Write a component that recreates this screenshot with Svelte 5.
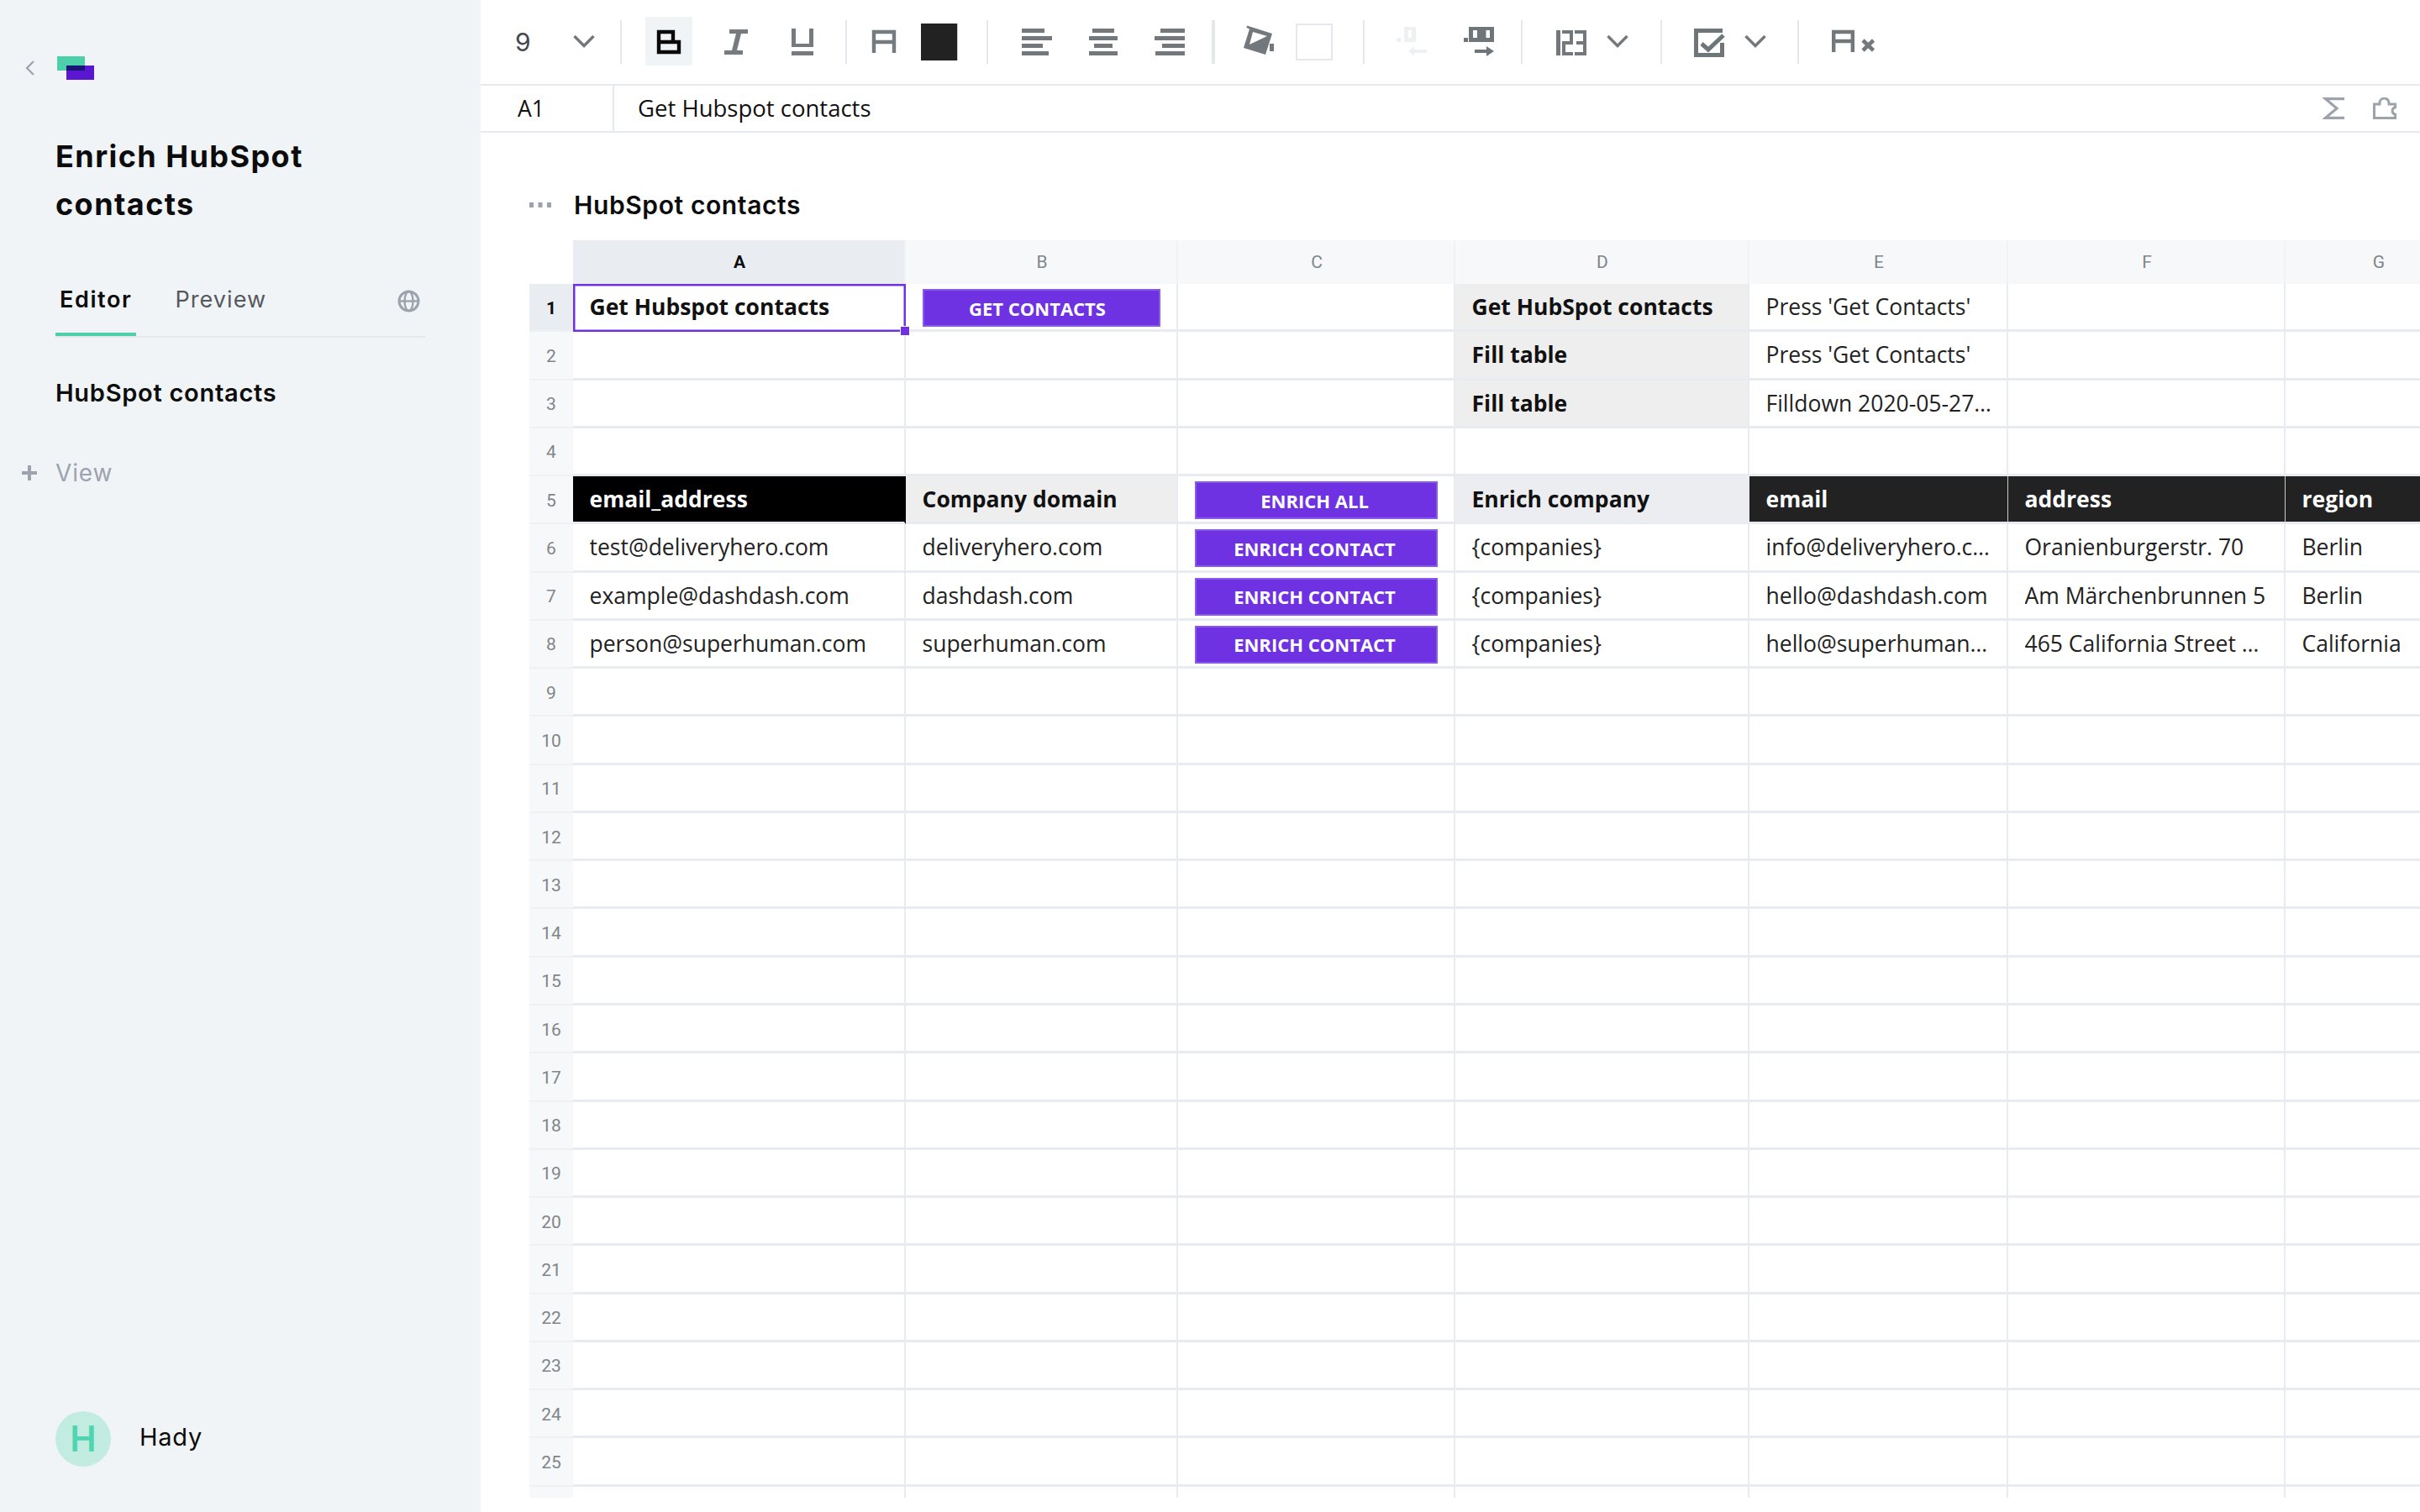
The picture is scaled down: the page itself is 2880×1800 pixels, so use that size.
<script lang="ts">
  const columns = ["A", "B", "C", "D", "E", "F", "G"];
  const rowNumbers = Array.from({ length: 26 }, (_, i) => i + 1);

  // sparse sheet content: kind picks the cell style, btn makes a button
  const txt = (t: string, kind = "") => ({ t, kind });
  const btn = (label: string, kind = "") => ({ label, kind });
  const head = (t: string) => txt(t, "dark");

  const sheet: Record<number, any[]> = {
    1: [txt("Get Hubspot contacts", "strong"), btn("GET CONTACTS", "wide"), null, txt("Get HubSpot contacts", "label"), txt("Press 'Get Contacts'")],
    2: [null, null, null, txt("Fill table", "label"), txt("Press 'Get Contacts'")],
    3: [null, null, null, txt("Fill table", "label"), txt("Filldown 2020-05-27 10:42:18")],
    5: [txt("email_address", "black"), txt("Company domain", "label"), btn("ENRICH ALL"), txt("Enrich company", "label2"), head("email"), head("address"), head("region")],
    6: [txt("test@deliveryhero.com"), txt("deliveryhero.com"), btn("ENRICH CONTACT"), txt("{companies}"), txt("info@deliveryhero.com"), txt("Oranienburgerstr. 70"), txt("Berlin")],
    7: [txt("example@dashdash.com"), txt("dashdash.com"), btn("ENRICH CONTACT"), txt("{companies}"), txt("hello@dashdash.com"), txt("Am Märchenbrunnen 5"), txt("Berlin")],
    8: [txt("person@superhuman.com"), txt("superhuman.com"), btn("ENRICH CONTACT"), txt("{companies}"), txt("hello@superhuman.com"), txt("465 California Street Suite 300"), txt("California")],
  };
</script>

<div class="app">
  <aside class="sidebar">
    <div class="brand">
      <svg class="back" width="11" height="18" viewBox="0 0 11 18"><path d="M10 1 L2 9 L10 17" fill="none" stroke="#9ca3af" stroke-width="2.2" /></svg>
      <svg width="44" height="28" viewBox="0 0 44 28">
        <rect width="33" height="17" fill="#4dd0aa" />
        <rect x="11" y="11" width="33" height="17" fill="#5a17cf" />
        <rect x="11" y="11" width="22" height="6" fill="#1a1478" />
      </svg>
    </div>
    <h1>Enrich HubSpot<br />contacts</h1>
    <div class="tabs">
      <span class="tab active">Editor</span>
      <span class="tab">Preview</span>
      <svg class="globe" width="27" height="27" viewBox="0 0 27 27" fill="none" stroke="#9ca3af" stroke-width="3">
        <circle cx="13.5" cy="13.5" r="11.5" />
        <ellipse cx="13.5" cy="13.5" rx="5" ry="11.5" stroke-width="2.4" />
        <path d="M2 13.5 H25" stroke-width="2.4" />
      </svg>
    </div>
    <div class="view-name">HubSpot contacts</div>
    <div class="add-view">
      <svg width="18" height="18" viewBox="0 0 18 18"><path d="M9 0 V18 M0 9 H18" stroke="#9ca3af" stroke-width="4" /></svg>
      <span>View</span>
    </div>
    <div class="user">
      <span class="avatar">H</span>
      <span class="user-name">Hady</span>
    </div>
  </aside>

  <main>
    <div class="toolbar">
      <div class="group g1">
        <span class="size">9</span>
        <svg class="icon" width="26" height="60" viewBox="682 20 26 60"><path class="chev" d="M683.5 43 L695 54.5 L706.5 43" /></svg>
      </div>
      <span class="sep"></span>
      <div class="group g2">
        <svg width="56" height="60" viewBox="768 20 56 60">
          <rect x="768" y="20" width="56" height="58" rx="2" fill="#f1f4f7" />
          <path d="M784 38 H801 V50 H808 V62 H784 Z M784 50 H801" fill="none" stroke="#0a0a0a" stroke-width="4.4" />
        </svg>
        <svg width="56" height="60" viewBox="848 20 56 60" fill="#757b7f">
          <path d="M868 35 H890 V40 H882 L877 60 H884 V65 H862 V60 H871 L876 40 H868 Z" />
        </svg>
        <svg width="56" height="60" viewBox="928 20 56 60" fill="#757b7f">
          <path d="M942 34 H947 V52 H963 V34 H968 V56 H942 Z M942 61 H968 V66 H942 Z" />
        </svg>
      </div>
      <span class="sep"></span>
      <div class="group g3">
        <svg width="56" height="60" viewBox="1024 20 56 60">
          <path d="M1040 63 V38 H1064 V63 M1040 50 H1064" fill="none" stroke="#757b7f" stroke-width="4.4" />
        </svg>
        <span class="swatch dark"></span>
      </div>
      <span class="sep"></span>
      <div class="group g4">
        <svg width="56" height="60" viewBox="1206 20 56 60" fill="#72787c">
          <rect x="1216" y="34" width="27" height="5" /><rect x="1216" y="43" width="36" height="5" /><rect x="1216" y="52" width="25" height="5" /><rect x="1216" y="61" width="32" height="5" />
        </svg>
        <svg width="56" height="60" viewBox="1285 20 56 60" fill="#72787c">
          <rect x="1300" y="34" width="26" height="5" /><rect x="1296" y="43" width="34" height="5" /><rect x="1302" y="52" width="22" height="5" /><rect x="1296" y="61" width="34" height="5" />
        </svg>
        <svg width="56" height="60" viewBox="1364 20 56 60" fill="#72787c">
          <rect x="1381" y="34" width="29" height="5" /><rect x="1374" y="43" width="36" height="5" /><rect x="1383" y="52" width="27" height="5" /><rect x="1375" y="61" width="35" height="5" />
        </svg>
      </div>
      <span class="sep wide"></span>
      <div class="group g5">
        <svg width="56" height="60" viewBox="1470 20 56 60" fill="#72787c">
          <path fill-rule="evenodd" d="M1484 30.5 L1514 40 L1506 65 L1480 57 L1487 34.5 L1483.500 33 Z M1491 38 L1508 43 L1487 53 Z" />
          <rect x="1511" y="52" width="5" height="9" />
        </svg>
        <span class="swatch light"></span>
      </div>
      <span class="sep"></span>
      <div class="group g6">
        <svg width="56" height="60" viewBox="1652 20 56 60" fill="#eef0f2">
          <rect x="1662" y="45" width="5" height="5" />
          <path fill-rule="evenodd" d="M1671 32 H1685 V50 H1671 Z M1676 36 V45 H1680 V36 Z" />
          <path d="M1698 59 H1683 V55 L1676 61 L1683 67 V63 H1698 Z" />
        </svg>
        <svg width="56" height="60" viewBox="1732 20 56 60" fill="#6f767a">
          <rect x="1742" y="45" width="5" height="5" />
          <path fill-rule="evenodd" d="M1748 32 H1778 V50 H1748 Z M1753 36 V45 H1758 V36 Z M1768.500 36 V45 H1773 V36 Z" />
          <path d="M1755 59 H1769 V55 L1778 61 L1769 67 V63 H1755 Z" />
        </svg>
      </div>
      <span class="sep"></span>
      <div class="group g7">
        <svg width="56" height="60" viewBox="1842 20 56 60" fill="#72787c">
          <rect x="1852" y="36" width="5" height="30" />
          <path d="M1859 36 H1872 V53 H1863 V62 H1872 V66 H1859 V49 H1868 V40 H1859 Z" />
          <path d="M1874 36 H1888 V66 H1874 V62 H1884 V53 H1876 V49 H1884 V40 H1874 Z" />
        </svg>
        <svg width="26" height="60" viewBox="1912 20 26 60"><path class="chev" d="M1913.500 43 L1925 54.500 L1936.500 43" /></svg>
      </div>
      <span class="sep"></span>
      <div class="group g8">
        <svg width="56" height="60" viewBox="2006 20 56 60" fill="none" stroke="#6f767a" stroke-width="5">
          <path d="M2050 36.500 H2018.500 V65.500 H2049.500 V51" />
          <path d="M2025 52 L2033 59 L2051 42" />
        </svg>
        <svg width="26" height="60" viewBox="2076 20 26 60"><path class="chev" d="M2077.500 43 L2089 54.500 L2100.500 43" /></svg>
      </div>
      <span class="sep"></span>
      <div class="group g9">
        <svg width="60" height="60" viewBox="2176 20 60 60">
          <path d="M2182.200 62 V38 H2204.800 V62 M2182 49 H2205" fill="none" stroke="#72787c" stroke-width="4.4" />
          <path d="M2217 48 L2229.500 60 M2229.500 48 L2217 60" fill="none" stroke="#72787c" stroke-width="4.600" />
        </svg>
      </div>
    </div>

    <div class="formula">
      <span class="ref">A1</span>
      <span class="value">Get Hubspot contacts</span>
      <svg width="26" height="26" viewBox="2764 116 26 26" fill="none" stroke="#9ca3ab" stroke-width="3.2">
        <path d="M2790 117.600 H2767.500 L2781 129 L2767.500 140.400 H2790" />
      </svg>
      <svg class="puzzle" width="28" height="26" viewBox="2824 116 28 26" fill="none" stroke="#9ca3ab" stroke-width="3">
        <path d="M2825.500 124 H2832 V122.500 A5.500 5.500 0 0 1 2843 122.500 V124 H2850.500 V127.800 A4.300 4.300 0 0 0 2850.500 136.200 V140.500 H2825.500 Z" />
      </svg>
    </div>

    <div class="sheet-title">
      <svg width="26" height="6" viewBox="0 0 26 6" fill="#9ca3ab">
        <rect width="5" height="6" /><rect x="10.500" width="5" height="6" /><rect x="21" width="5" height="6" />
      </svg>
      <h2>HubSpot contacts</h2>
    </div>

    <div class="grid">
      <div class="corner"></div>
      {#each columns as c}
        <div class="col" class:on={c === "A"}>{c}</div>
      {/each}
      {#each rowNumbers as n}
        <div class="num" class:on={n === 1}>{n}</div>
        {#each columns as c, i}
          {@const cell = sheet[n]?.[i]}
          <div class="cell" class:strong={cell?.kind === "strong"} class:label={cell?.kind === "label"} class:label2={cell?.kind === "label2"} class:black={cell?.kind === "black"} class:dark={cell?.kind === "dark"} class:selected={n === 1 && i === 0} class:has-btn={cell?.label}>
            {#if cell?.label}
              <button class:wide={cell.kind === "wide"}>{cell.label}</button>
            {:else if cell}
              <span class="text">{cell.t}</span>
            {/if}
          </div>
        {/each}
      {/each}
    </div>
  </main>
</div>

<style>
  :global(body) {
    margin: 0;
    background: #fff;
  }
  .app {
    display: flex;
    width: 2880px;
    height: 1800px;
    overflow: hidden;
    font-family: "Inter", "Liberation Sans", sans-serif;
    color: #0c0c0c;
  }

  /* sidebar */
  .sidebar {
    box-sizing: border-box;
    width: 572px;
    flex: none;
    display: flex;
    flex-direction: column;
    padding: 67px 66px 54px 66px;
    background: #f1f4f7;
  }
  .brand {
    display: flex;
    align-items: center;
    gap: 27px;
    margin-left: -36px;
    height: 28px;
  }
  h1 {
    margin: 63px 0 0;
    font-size: 36px;
    line-height: 57px;
    font-weight: 700;
    letter-spacing: 0.04em;
  }
  .tabs {
    display: flex;
    align-items: flex-start;
    margin: 68px 0 48px;
    width: 440px;
    border-bottom: 2px solid #e4e8ed;
  }
  .tab {
    padding: 0 5px 22px;
    font-size: 27px;
    line-height: 34px;
    letter-spacing: 0.04em;
    color: #54585e;
    margin-right: 41px;
    border-bottom: 4px solid transparent;
  }
  .tab.active {
    font-weight: 600;
    color: #0c0c0c;
    border-color: #4dd0aa;
    letter-spacing: 0.06em;
  }
  .globe {
    margin: 5px 6px 0 auto;
  }
  .view-name {
    font-size: 29px;
    line-height: 36px;
    font-weight: 600;
    letter-spacing: 0.025em;
  }
  .add-view {
    display: flex;
    align-items: center;
    gap: 22px;
    margin: 59px 0 0 -40px;
    font-size: 28px;
    line-height: 36px;
    letter-spacing: 0.03em;
    color: #9ca3af;
  }
  .user {
    display: flex;
    align-items: center;
    gap: 34px;
    margin: auto 0 0;
  }
  .avatar {
    width: 66px;
    height: 66px;
    border-radius: 50%;
    background: #c2ecdf;
    color: #4fd6b0;
    font-size: 42px;
    font-weight: 600;
    text-align: center;
    line-height: 66px;
  }
  .user-name {
    padding-bottom: 6px;
    font-size: 29px;
    letter-spacing: 0.025em;
  }

  /* toolbar */
  main {
    flex: 1;
    min-width: 0;
    overflow: hidden;
  }
  .toolbar {
    display: flex;
    align-items: center;
    height: 100px;
    padding-left: 43px;
    border-bottom: 2px solid #e6e9ee;
  }
  .toolbar svg {
    display: block;
    flex: none;
  }
  .chev {
    fill: none;
    stroke: #72787c;
    stroke-width: 3.4;
  }
  .group {
    display: flex;
    align-items: center;
  }
  .size {
    width: 69px;
    margin-left: -2px;
    font-size: 30px;
    color: #44484c;
  }
  .sep {
    flex: none;
    width: 2px;
    height: 52px;
    background: #e4e8ed;
  }
  .sep.wide {
    width: 4px;
  }
  .swatch {
    box-sizing: border-box;
    width: 44px;
    height: 44px;
  }
  .swatch.dark {
    background: #222;
  }
  .swatch.light {
    border: 2px solid #e4e8ed;
  }
  .g1 { padding-right: 30px; }
  .g2 { padding: 0 22px 0 28px; gap: 24px; }
  .g3 { padding: 0 34px 0 16px; gap: 16px; }
  .g4 { padding: 0 22px 0 30px; gap: 23px; }
  .g5 { padding: 0 36px 0 24px; gap: 16px; }
  .g6 { padding: 0 22px 0 28px; gap: 24px; }
  .g7 { padding: 0 38px 0 30px; gap: 14px; }
  .g8 { padding: 0 37px 0 28px; gap: 14px; }
  .g9 { padding-left: 35px; }

  /* formula bar */
  .formula {
    display: flex;
    align-items: center;
    height: 54px;
    border-bottom: 2px solid #e6e9ee;
    font-family: "Open Sans", sans-serif;
    font-size: 26.500px;
    color: #111;
  }
  .ref {
    box-sizing: border-box;
    width: 159px;
    height: 100%;
    padding-left: 44px;
    line-height: 54px;
    border-right: 2px solid #e6e9ee;
  }
  .value {
    flex: 1;
    padding: 0 0 2px 28px;
    font-size: 27.500px;
  }
  .puzzle {
    margin: 0 28px 0 34px;
  }

  /* sheet */
  .sheet-title {
    display: flex;
    align-items: center;
    gap: 27px;
    height: 40px;
    margin: 66px 0 22px 58px;
  }
  h2 {
    margin: 0;
    font-size: 30px;
    font-weight: 600;
    letter-spacing: 0.02em;
  }
  .grid {
    display: grid;
    grid-template-columns: 52px 396px 324px 330px 350px 308px 330px 222px;
    grid-template-rows: 52px;
    grid-auto-rows: 57.27px;
    width: 2512px;
    height: 1497px;
    margin-left: 58px;
    overflow: hidden;
    font-family: "Open Sans", sans-serif;
    font-size: 26.500px;
    color: #222;
  }
  .col,
  .num {
    display: flex;
    align-items: center;
    justify-content: center;
    background: #f7f8fa;
    font-family: "Roboto", sans-serif;
    font-size: 21px;
    color: #80858a;
  }
  .col {
    padding-left: 2px;
    border-right: 2px solid #f0f2f5;
  }
  .num {
    padding-top: 2px;
    border-bottom: 2px solid #eef1f4;
  }
  .col.on,
  .num.on {
    background: #e9edf1;
    color: #0c0c0c;
    font-weight: 700;
  }
  .cell {
    position: relative;
    box-sizing: border-box;
    min-width: 0;
    display: flex;
    align-items: center;
    padding: 3px 17px 0 19.500px;
    border-right: 2px solid #e8ebf0;
    border-bottom: 3px solid #e8ebf0;
  }
  .text {
    margin-top: -3px;
    overflow: hidden;
    white-space: nowrap;
    text-overflow: ellipsis;
  }
  .strong,
  .label,
  .label2,
  .black,
  .dark {
    font-weight: 700;
    color: #111;
  }
  .label {
    background: #eee;
  }
  .label2 {
    background: #ecedf0;
  }
  .black,
  .dark {
    color: #fff;
    background: #000;
    border-right-color: transparent;
  }
  .dark {
    background: #222;
    border-right: 1px solid #ccc;
  }
  .selected {
    z-index: 1;
    padding-top: 0;
    box-shadow: inset 0 0 0 2.500px #6f32e3;
    border: 0;
  }
  .selected::after {
    content: "";
    position: absolute;
    right: -5px;
    bottom: -5px;
    width: 10px;
    height: 10px;
    background: #6f32e3;
    border: 1px solid #fff;
  }
  .has-btn {
    padding: 3px 19px 0 20px;
  }
  button {
    flex: 1;
    height: 45px;
    padding: 0 4px 0 0;
    border: 2px solid #8a5be9;
    background: #6f32e3;
    color: #fff;
    font-family: "Open Sans", sans-serif;
    font-size: 22px;
    font-weight: 700;
  }
  button.wide {
    padding-right: 10px;
  }
</style>
